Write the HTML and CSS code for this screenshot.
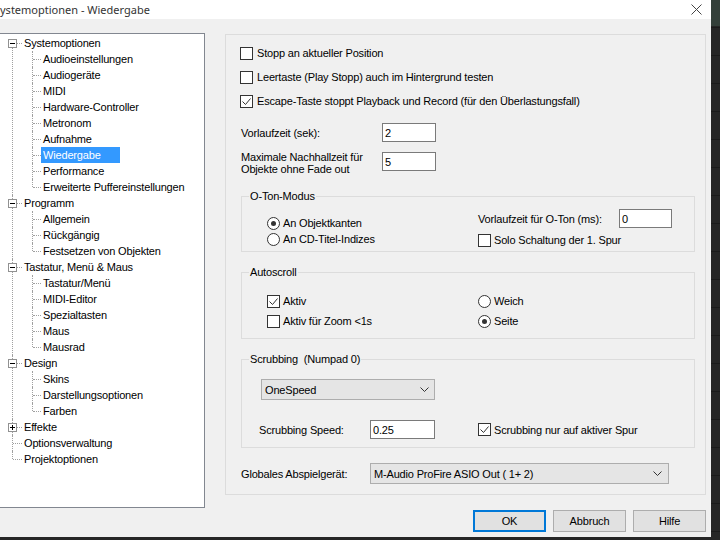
FILE: index.html
```html
<!DOCTYPE html>
<html lang="de">
<head>
    <meta charset="UTF-8">
    <title>Systemoptionen - Wiedergabe</title>
    <link rel="stylesheet" href="styles.css">
</head>
<body>
<div class="window">
    <div class="titlebar">
        <span class="title">ystemoptionen - Wiedergabe</span>
        <svg class="close" width="11" height="11" viewBox="0 0 11 11"><path d="M0.5 0.5 L10.5 10.5 M10.5 0.5 L0.5 10.5" stroke="#444" stroke-width="1" fill="none"/></svg>
    </div>
    <div class="main">
        <ul class="tree">
            <li><div class="node"><span class="exp minus"></span><span class="label">Systemoptionen</span></div>
                <ul class="sub">
                    <li><div class="node"><span class="label">Audioeinstellungen</span></div></li>
                    <li><div class="node"><span class="label">Audiogeräte</span></div></li>
                    <li><div class="node"><span class="label">MIDI</span></div></li>
                    <li><div class="node"><span class="label">Hardware-Controller</span></div></li>
                    <li><div class="node"><span class="label">Metronom</span></div></li>
                    <li><div class="node"><span class="label">Aufnahme</span></div></li>
                    <li><div class="node"><span class="label selected">Wiedergabe</span></div></li>
                    <li><div class="node"><span class="label">Performance</span></div></li>
                    <li><div class="node"><span class="label">Erweiterte Puffereinstellungen</span></div></li>
                </ul>
            </li>
            <li><div class="node"><span class="exp minus"></span><span class="label">Programm</span></div>
                <ul class="sub">
                    <li><div class="node"><span class="label">Allgemein</span></div></li>
                    <li><div class="node"><span class="label">Rückgängig</span></div></li>
                    <li><div class="node"><span class="label">Festsetzen von Objekten</span></div></li>
                </ul>
            </li>
            <li><div class="node"><span class="exp minus"></span><span class="label">Tastatur, Menü &amp; Maus</span></div>
                <ul class="sub">
                    <li><div class="node"><span class="label">Tastatur/Menü</span></div></li>
                    <li><div class="node"><span class="label">MIDI-Editor</span></div></li>
                    <li><div class="node"><span class="label">Spezialtasten</span></div></li>
                    <li><div class="node"><span class="label">Maus</span></div></li>
                    <li><div class="node"><span class="label">Mausrad</span></div></li>
                </ul>
            </li>
            <li><div class="node"><span class="exp minus"></span><span class="label">Design</span></div>
                <ul class="sub">
                    <li><div class="node"><span class="label">Skins</span></div></li>
                    <li><div class="node"><span class="label">Darstellungsoptionen</span></div></li>
                    <li><div class="node"><span class="label">Farben</span></div></li>
                </ul>
            </li>
            <li><div class="node"><span class="exp plus"></span><span class="label">Effekte</span></div></li>
            <li><div class="node"><span class="label">Optionsverwaltung</span></div></li>
            <li><div class="node"><span class="label">Projektoptionen</span></div></li>
        </ul>

        <div class="side">
            <div class="panel">
                <div class="opt top"><span class="chk"></span>Stopp an aktueller Position</div>
                <div class="opt top"><span class="chk"></span>Leertaste (Play Stopp) auch im Hintergrund testen</div>
                <div class="opt top"><span class="chk on"><svg viewBox="0 0 11 11"><polyline points="1.5,5.5 4.5,8.5 9.5,2.5" /></svg></span>Escape-Taste stoppt Playback und Record (für den Überlastungsfall)</div>

                <div class="field first">
                    <span class="lbl w141">Vorlaufzeit (sek):</span>
                    <input class="edit w54" type="text" value="2">
                </div>
                <div class="field second">
                    <span class="lbl w141 two">Maximale Nachhallzeit für<br>Objekte ohne Fade out</span>
                    <input class="edit w54" type="text" value="5">
                </div>

                <fieldset class="group oton">
                    <legend>O-Ton-Modus</legend>
                    <div class="group-body">
                        <div class="col-left">
                            <div class="opt"><span class="radio on"></span>An Objektkanten</div>
                            <div class="opt"><span class="radio"></span>An CD-Titel-Indizes</div>
                        </div>
                        <div class="col-right">
                            <div class="field">
                                <span class="lbl w141">Vorlaufzeit für O-Ton (ms):</span>
                                <input class="edit w53" type="text" value="0">
                            </div>
                            <div class="opt gap3"><span class="chk"></span>Solo Schaltung der 1. Spur</div>
                        </div>
                    </div>
                </fieldset>

                <fieldset class="group autoscroll">
                    <legend>Autoscroll</legend>
                    <div class="group-body grid2">
                        <div class="opt"><span class="chk on"><svg viewBox="0 0 11 11"><polyline points="1.5,5.5 4.5,8.5 9.5,2.5" /></svg></span>Aktiv</div>
                        <div class="opt"><span class="radio"></span>Weich</div>
                        <div class="opt"><span class="chk"></span>Aktiv für Zoom &lt;1s</div>
                        <div class="opt"><span class="radio on"></span>Seite</div>
                    </div>
                </fieldset>

                <fieldset class="group scrubbing">
                    <legend>Scrubbing &nbsp;(Numpad 0)</legend>
                    <div class="group-body">
                        <div class="combo w174">
                            <span>OneSpeed</span>
                            <svg width="9" height="5" viewBox="0 0 9 5"><polyline points="0.5,0.5 4.5,4.5 8.5,0.5" /></svg>
                        </div>
                        <div class="field speed">
                            <span class="lbl w111">Scrubbing Speed:</span>
                            <input class="edit w65" type="text" value="0.25">
                            <div class="opt spur"><span class="chk on"><svg viewBox="0 0 11 11"><polyline points="1.5,5.5 4.5,8.5 9.5,2.5" /></svg></span>Scrubbing nur auf aktiver Spur</div>
                        </div>
                    </div>
                </fieldset>

                <div class="field device">
                    <span class="lbl w129">Globales Abspielgerät:</span>
                    <div class="combo w299">
                        <span>M-Audio ProFire ASIO Out ( 1+ 2)</span>
                        <svg width="9" height="5" viewBox="0 0 9 5"><polyline points="0.5,0.5 4.5,4.5 8.5,0.5" /></svg>
                    </div>
                </div>
            </div>

            <div class="buttons">
                <button class="btn default">OK</button>
                <button class="btn">Abbruch</button>
                <button class="btn">Hilfe</button>
            </div>
        </div>
    </div>
</div>
</body>
</html>
```

FILE: styles.css
```css
body {
    margin: 0;
    background-color: #262626;
    background-image:
        linear-gradient(#34403a, #34403a),
        repeating-linear-gradient(#262626 0, #262626 27px, #1b1b1b 27px, #1b1b1b 28px);
    background-size: 100% 26px, 100% 100%;
    background-repeat: no-repeat, repeat;
    font-family: "Liberation Sans", Arial, sans-serif;
    font-size: 11px;
    letter-spacing: -0.17px;
    color: #000;
}
.window {
    width: 711px;
    height: 537px;
    background: #f0f0f0;
    display: flex;
    flex-direction: column;
    overflow: hidden;
}
.titlebar {
    height: 19px;
    flex: none;
    background: #fff;
    display: flex;
    align-items: center;
    justify-content: space-between;
    padding: 0 9px 0 0;
}
.title {
    font-family: "Noto Sans", sans-serif;
    font-size: 11px;
    letter-spacing: 0;
    color: #333;
}
.close {
    display: block;
}
.main {
    display: flex;
    padding-top: 14px;
}

/* tree view */
.tree, .tree ul {
    list-style: none;
    margin: 0;
    padding: 0;
}
.tree {
    width: 206px;
    height: 475px;
    box-sizing: border-box;
    margin-left: -1px;
    padding-top: 1px;
    border: 1px solid #828790;
    background: #fff;
    flex: none;
}
.tree li {
    position: relative;
}
.node {
    height: 16px;
    line-height: 16px;
    padding-left: 22px;
    white-space: nowrap;
    position: relative;
}
.sub .node {
    padding-left: 41px;
}
.label {
    display: inline-block;
    padding: 0 2px;
    line-height: 16px;
}
.label.selected {
    background: #3399ff;
    color: #fff;
    padding-right: 19px;
}
.tree > li::before,
.sub > li::before {
    content: "";
    position: absolute;
    left: 12px;
    top: 0;
    bottom: 0;
    border-left: 1px dotted #a0a0a0;
}
.tree > li:first-child::before {
    top: 8px;
}
.tree > li:last-child::before,
.sub > li:last-child::before {
    bottom: auto;
    height: 8px;
}
.sub > li::before {
    left: 32px;
}
.node::before {
    content: "";
    position: absolute;
    left: 13px;
    top: 8px;
    width: 9px;
    border-top: 1px dotted #a0a0a0;
}
.sub .node::before {
    left: 33px;
    width: 8px;
}
.exp {
    position: absolute;
    left: 8px;
    top: 4px;
    width: 9px;
    height: 9px;
    box-sizing: border-box;
    border: 1px solid #919191;
    background: #fff;
    z-index: 1;
}
.exp::after {
    content: "";
    position: absolute;
    left: 1px;
    top: 3px;
    width: 5px;
    height: 1px;
    background: #000;
}
.exp.plus::before {
    content: "";
    position: absolute;
    left: 3px;
    top: 1px;
    width: 1px;
    height: 5px;
    background: #000;
}

/* right side */
.side {
    width: 481px;
    margin-left: 20px;
    margin-top: 1px;
    display: flex;
    flex-direction: column;
}
.panel {
    border: 1px solid #dcdcdc;
    padding: 6px 10px 10px 15px;
}
.opt {
    display: flex;
    align-items: center;
    height: 16px;
    white-space: nowrap;
}
.opt.top {
    height: 24px;
    margin-left: -1px;
}
.chk, .radio {
    width: 13px;
    height: 13px;
    box-sizing: border-box;
    border: 1px solid #333;
    background: #fff;
    margin-right: 3px;
    flex: none;
}
.opt.top .chk {
    margin-right: 4px;
}
.chk svg {
    display: block;
    width: 11px;
    height: 11px;
}
.chk polyline, .combo polyline {
    fill: none;
    stroke: #333;
    stroke-width: 1;
}
.radio {
    border-radius: 50%;
    display: flex;
    align-items: center;
    justify-content: center;
}
.radio.on::after {
    content: "";
    width: 5px;
    height: 5px;
    border-radius: 50%;
    background: #333;
}
.field {
    display: flex;
    align-items: center;
}
.field.first {
    margin-top: 10px;
}
.field.second {
    margin-top: 10px;
    align-items: flex-start;
}
.lbl {
    flex: none;
    white-space: nowrap;
}
.lbl.two {
    line-height: 12px;
    margin-top: -1px;
}
.w111 { width: 111px; }
.w129 { width: 129px; }
.w141 { width: 141px; }
.edit {
    height: 19px;
    box-sizing: border-box;
    border: 1px solid #7a7a7a;
    background: #fff;
    padding: 0 2px;
    font: inherit;
    letter-spacing: inherit;
    color: #000;
    margin: 0;
    outline: none;
}
.w53 { width: 53px; }
.w54 { width: 54px; }
.w65 { width: 65px; }

/* group boxes */
.group {
    margin: 15px 0 0;
    padding: 0 7px 3px;
    border: 1px solid #dcdcdc;
    min-width: 0;
}
.group legend {
    padding: 0 1px;
    line-height: 13px;
}
.oton .group-body {
    display: flex;
    padding: 6px 0 0 18px;
}
.col-left {
    width: 211px;
    margin-top: 6px;
}
.opt.gap3 {
    margin-top: 4px;
}
.autoscroll {
    margin-top: 14px;
    padding-bottom: 9px;
}
.grid2 {
    display: grid;
    grid-template-columns: 211px auto;
    row-gap: 4px;
    padding: 14px 0 0 18px;
}
.scrubbing {
    margin-top: 14px;
    padding-bottom: 8px;
}
.scrubbing .group-body {
    padding: 13px 0 0 12px;
}
.combo {
    height: 21px;
    box-sizing: border-box;
    border: 1px solid #adadad;
    background: #e5e5e5;
    display: flex;
    align-items: center;
    justify-content: space-between;
    padding: 0 5px 0 3px;
    white-space: nowrap;
}
.combo svg {
    display: block;
}
.w174 { width: 174px; }
.w299 {
    width: 299px;
    padding-right: 6px;
}
.field.speed {
    margin-top: 20px;
    margin-left: -2px;
}
.opt.spur {
    margin-left: 43px;
}
.field.device {
    margin-top: 15px;
}

/* dialog buttons */
.buttons {
    display: flex;
    justify-content: flex-end;
    gap: 7px;
    margin-top: 15px;
}
.btn {
    width: 73px;
    height: 22px;
    box-sizing: border-box;
    border: 1px solid #adadad;
    background: #e1e1e1;
    font: inherit;
    letter-spacing: inherit;
    color: #000;
    padding: 0;
}
.btn.default {
    border: 2px solid #0078d7;
}
```
